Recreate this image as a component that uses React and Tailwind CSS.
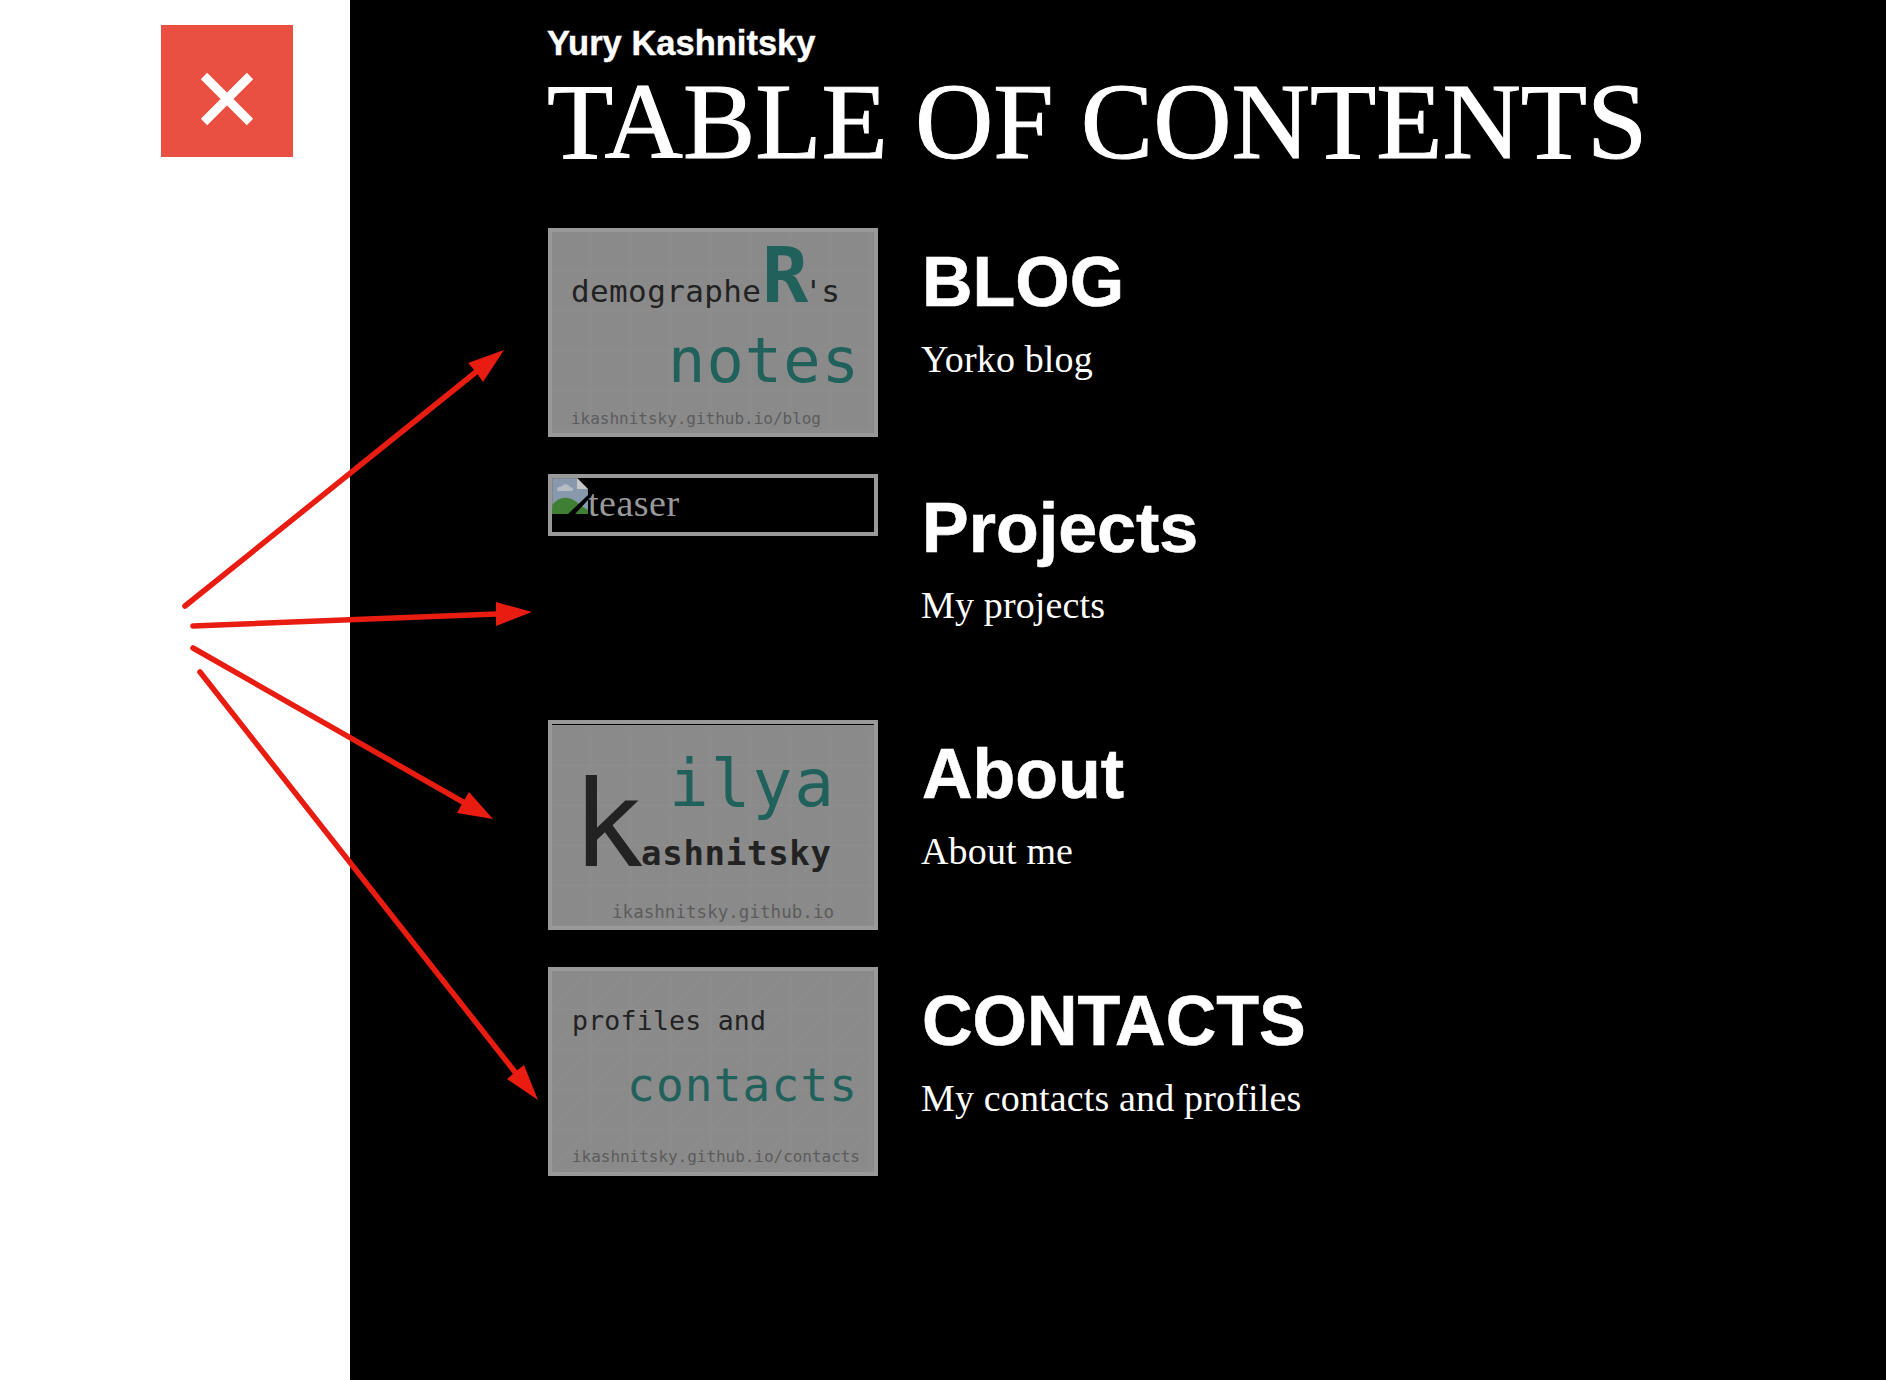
const Grid = ({ id, dy = 0 }) => (
  <>
    <defs>
      <pattern id={id} x="-1" y={dy - 1} width="40" height="40" patternUnits="userSpaceOnUse">
        <path d="M0 40L40 0" stroke="#8f8f8f" strokeWidth="1" fill="none" />
        <path d="M39.5 0V40M0 39.5H40" stroke="#8e8e8e" strokeWidth="1" fill="none" />
      </pattern>
    </defs>
    <rect width="322" height="202" fill="#8a8a8a" />
    <rect width="322" height="202" fill={`url(#${id})`} />
  </>
);

const Thumb = ({ id, dy, children, top }) => (
  <div className="w-[330px] shrink-0 border-4 border-[#999999] bg-black">
    {top && <div className="h-px bg-black" />}
    <svg width="322" height="201" viewBox="0 0 322 201" className="block font-['DejaVu_Sans_Mono',monospace]">
      <Grid id={id} dy={dy} />
      {children}
    </svg>
  </div>
);

const BrokenImage = () => (
  <svg width="36" height="36" viewBox="0 0 36 36" className="shrink-0">
    <path d="M0 0H25L36 11V36H0Z" fill="#8899ad" />
    <path d="M25 0L36 11H25Z" fill="#c8c8c8" />
    <path d="M5 12C5 8 9 9 10 8C12 5 17 6 18 9C21 9 22 12 20 13H6C5 13 5 12 5 12Z" fill="#b4bcc6" />
    <path d="M0 36V27C5 21 11 19 16 20C21 21 25 24 28 27L36 32V36Z" fill="#3f7f33" />
    <path d="M16 36L36 17V22L23 36Z" fill="#000000" />
    <path d="M0 0H25L36 11V14" fill="none" stroke="#777777" strokeWidth="1" />
    <path d="M0 0V30" fill="none" stroke="#777777" strokeWidth="1" />
  </svg>
);

const Row = ({ title, sub, h, children }) => (
  <div className={`flex gap-[43px] items-start ${h}`}>
    {children}
    <div className="flex flex-col pt-[14px]">
      <h2 className="ml-px text-[70px] leading-[80px] font-bold font-['Liberation_Sans',sans-serif] [-webkit-text-stroke:0.6px_#ffffff] text-white">{title}</h2>
      <p className="mt-[17px] text-[38px] leading-[40px] tracking-[0.15px] font-['Liberation_Serif',serif] text-white">{sub}</p>
    </div>
  </div>
);

const Arrow = ({ x1, y1, x2, y2, tip, a, b }) => (
  <>
    <line x1={x1} y1={y1} x2={x2} y2={y2} stroke="#e91c12" strokeWidth="5.5" strokeLinecap="round" />
    <polygon points={`${tip} ${a} ${x2},${y2} ${b}`} fill="#e91c12" />
  </>
);

export default function App() {
  const dark = "fill-[#222222]";
  const teal = "fill-[#20615c]";
  const grey = "fill-[#5c5c5c]";
  return (
    <div className="relative flex h-screen w-full overflow-hidden bg-black">
      <aside className="w-[350px] shrink-0 bg-white pt-[25px] pl-[161px]">
        <button className="flex h-[132px] w-[132px] items-center justify-center bg-[#e95041] pt-[15px]">
          <svg width="56" height="56" viewBox="0 0 56 56">
            <path d="M5 5L51 51M51 5L5 51" stroke="#ffffff" strokeWidth="9" fill="none" />
          </svg>
        </button>
      </aside>

      <main className="flex-1 pl-[198px] pt-[23px] text-white">
        <div className="-ml-px h-[38px] text-[34.5px] leading-[40px] font-bold font-['Liberation_Sans',sans-serif] [-webkit-text-stroke:0.4px_#ffffff]">Yury Kashnitsky</div>
        <h1 className="-ml-px mb-[47px] h-[120px] whitespace-nowrap text-[108.5px] leading-[120px] font-['Liberation_Serif',serif] font-normal [-webkit-text-stroke:1px_#ffffff]">TABLE OF CONTENTS</h1>

        <Row title="BLOG" sub="Yorko blog" h="h-[246px]">
          <Thumb id="g1">
            <text x="19" y="70" fontSize="31" textLength="190" className={dark}>demographe</text>
            <text x="210" y="70" fontSize="77" fontWeight="700" className={teal}>R</text>
            <text x="252" y="70" fontSize="31" textLength="36" className={dark}>'s</text>
            <text x="116" y="150" fontSize="62" textLength="191" className={teal}>notes</text>
            <text x="19" y="192" fontSize="16" textLength="250" className={grey}>ikashnitsky.github.io/blog</text>
          </Thumb>
        </Row>

        <Row title="Projects" sub="My projects" h="h-[246px]">
          <div className="flex h-[62px] w-[330px] shrink-0 items-start border-4 border-[#999999] bg-black">
            <BrokenImage />
            <span className="text-[38px] leading-[50px] tracking-[0.5px] font-['Liberation_Serif',serif] text-[#999999]">teaser</span>
          </div>
        </Row>

        <Row title="About" sub="About me" h="h-[247px]">
          <Thumb id="g3" dy={2} top>
            <text x="117" y="81" fontSize="66" textLength="165" className={teal}>ilya</text>
            <text x="20" y="141" fontSize="120" className={dark}>k</text>
            <text x="89" y="140" fontSize="34" fontWeight="700" textLength="190" className={dark}>ashnitsky</text>
            <text x="60" y="193" fontSize="17.5" textLength="222" className={grey}>ikashnitsky.github.io</text>
          </Thumb>
        </Row>

        <Row title="CONTACTS" sub="My contacts and profiles" h="h-[200px]">
          <Thumb id="g4">
            <text x="20" y="59" fontSize="26.5" textLength="194" className={dark}>profiles and</text>
            <text x="75" y="130" fontSize="46" textLength="230" className={teal}>contacts</text>
            <text x="20" y="191" fontSize="16" textLength="288" className={grey}>ikashnitsky.github.io/contacts</text>
          </Thumb>
        </Row>
      </main>

      <svg className="pointer-events-none absolute left-0 top-0" width="1886" height="1380" viewBox="0 0 1886 1380">
        <Arrow x1={185} y1={606} x2={476} y2={372} tip="504,350" a="468,363" b="483,382" />
        <Arrow x1={193} y1={626} x2={496} y2={614} tip="532,612" a="496,602" b="496,626" />
        <Arrow x1={193} y1={648} x2={463} y2={802} tip="493,819" a="469,792" b="457,813" />
        <Arrow x1={200} y1={672} x2={515} y2={1072} tip="538,1100" a="524,1065" b="507,1079" />
      </svg>
    </div>
  );
}
